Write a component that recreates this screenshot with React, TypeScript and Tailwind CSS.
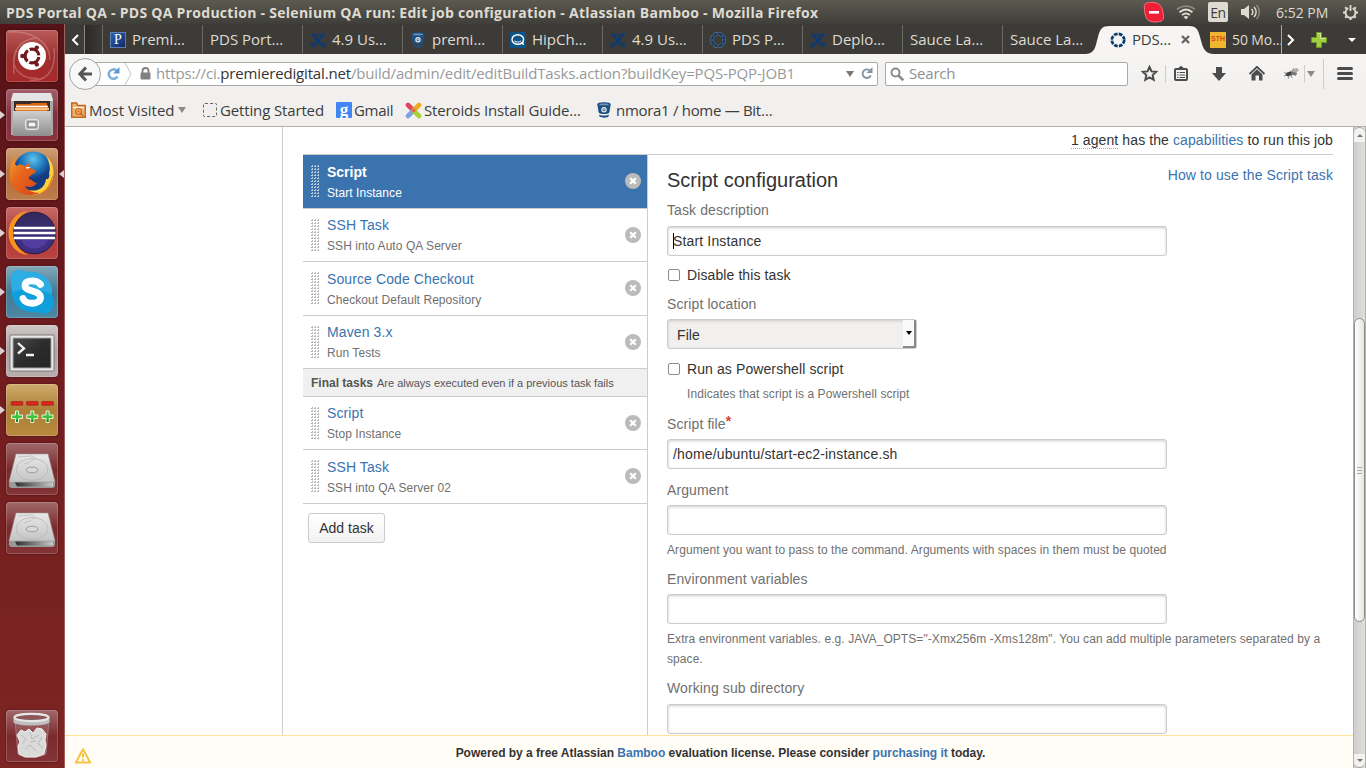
import type { ReactNode } from "react";

const ui = "font-['Open_Sans','Noto_Sans',sans-serif]";

/* ---------- favicons ---------- */

function JiraMark() {
  return (
    <svg width="16" height="16" viewBox="0 0 16 16" className="shrink-0" fill="none" stroke="#0b3a75">
      <path d="M1 2.200c2.500.3 3.500 1.300 5 3.500M15 2.200c-2.500.3-3.500 1.300-5 3.500" strokeWidth="2.200" />
      <path d="M5.500 5.500c1 2.500 3 4.500 5.500 6.500M10.500 5.500c-1 2.500-3 4.500-5.500 6.500" strokeWidth="2.400" />
      <path d="M5.500 1.200a2.600 2.600 0 0 0 5 0" strokeWidth="1.200" />
      <circle cx="2.800" cy="13" r="1.700" strokeWidth="1.400" />
      <circle cx="13.200" cy="13" r="1.700" strokeWidth="1.400" />
    </svg>
  );
}

function BitbucketMark() {
  return (
    <svg width="16" height="16" viewBox="0 0 16 16" className="shrink-0">
      <path d="M1.300 2.200C1.300 1 4 .2 8 .2s6.700.8 6.700 2l-1.300 8.300c-1 1-3 1.500-5.400 1.500s-4.400-.5-5.400-1.500z" fill="#205081" />
      <path d="M3 12.400c1.500.9 3 1.200 5 1.200s3.500-.3 5-1.200l-.5 2.200c-.8.8-2.500 1.200-4.500 1.200s-3.700-.4-4.500-1.200z" fill="#205081" />
      <ellipse cx="8" cy="2.400" rx="4.800" ry="0.900" fill="#6f93b8" />
      <circle cx="8" cy="7.800" r="2.100" fill="none" stroke="#e8eef5" strokeWidth="1.200" />
      <circle cx="8" cy="7.800" r="0.800" fill="#e8eef5" />
    </svg>
  );
}

function BambooRing({ light }: { light?: boolean }) {
  return (
    <svg width="16" height="16" viewBox="0 0 16 16" className="shrink-0">
      {light && <circle cx="8" cy="8" r="6.300" fill="none" stroke="#7890a8" strokeWidth="3.400" strokeDasharray="3.900 1.050" />}
      <circle cx="8" cy="8" r="6.200" fill="none" stroke="#0b3a6b" strokeWidth="2.700" strokeDasharray="3.700 1.170" />
    </svg>
  );
}

function PremiereMark() {
  return (
    <span className="flex h-4 w-4 shrink-0 items-center justify-center border border-[#5f7fb4] bg-linear-to-br from-[#2a62b8] to-[#102c66] font-['Liberation_Serif',serif] text-[14px] leading-none text-white">
      P
    </span>
  );
}

function HipChatMark() {
  return (
    <svg width="16" height="16" viewBox="0 0 16 16" className="shrink-0">
      <rect width="16" height="16" fill="#0d5484" />
      <ellipse cx="7.800" cy="7.500" rx="5.800" ry="4.800" fill="none" stroke="#fff" strokeWidth="1.400" />
      <path d="M4.500 8.800c1.500 1.700 5 1.700 6.500 0" fill="none" stroke="#fff" strokeWidth="1" />
      <path d="M10.500 11.500l3.500 1.800-.8-4z" fill="#fff" />
    </svg>
  );
}

/* ---------- launcher drawings ---------- */

const DashArt = () => (
  <svg viewBox="0 0 52 52" className="h-full w-full">
    <g fill="none" stroke="#e9b5b2" strokeOpacity=".35" strokeWidth="1.500">
      <path d="M2 2C22 0 44 10 44 30M8 44C6 22 12 10 30 8M24 50C44 52 50 36 48 18M10 20c-8 18 6 30 22 28" />
    </g>
    <circle cx="26" cy="26" r="14" fill="#fff" />
    <circle cx="26" cy="26" r="6.900" fill="none" stroke="#6e1a1e" strokeWidth="3.200" strokeDasharray="12.500 1.950" strokeDashoffset="-1" />
    <circle cx="16.400" cy="26" r="2.200" fill="#6e1a1e" />
    <circle cx="30.800" cy="17.600" r="2.200" fill="#6e1a1e" />
    <circle cx="30.800" cy="34.400" r="2.200" fill="#6e1a1e" />
  </svg>
);

const FilesArt = () => (
  <svg viewBox="0 0 52 52" className="h-full w-full">
    <defs>
      <linearGradient id="cab" x2="0" y2="1">
        <stop stopColor="#cfcfcf" />
        <stop offset="1" stopColor="#8e8e8e" />
      </linearGradient>
    </defs>
    <path d="M7 5h38l2 5v36H5V10z" fill="#a9a9a9" />
    <path d="M7 4h38l2 8H5z" fill="#e4e4e4" />
    <rect x="8" y="12" width="36" height="10" fill="#3a2b26" />
    <path d="M10 15l14 0 2-1h15v8H10z" fill="#d76a17" />
    <path d="M10 17.500h32" stroke="#fff" strokeWidth="1.500" />
    <path d="M9 20h34" stroke="#f7c27e" strokeWidth="2.500" />
    <path d="M7 22h38v25H7z" fill="url(#cab)" />
    <rect x="19.500" y="30.500" width="13" height="10" rx="2" fill="#b9b9b9" stroke="#e6e6e6" />
    <rect x="22" y="33" width="8" height="5" fill="#f5f5f5" stroke="#6b6b6b" />
  </svg>
);

const FirefoxArt = () => (
  <svg viewBox="0 0 52 52" className="h-full w-full">
    <defs>
      <radialGradient id="globe" cx=".5" cy=".2">
        <stop stopColor="#5ec3ee" />
        <stop offset=".6" stopColor="#1f74b8" />
        <stop offset="1" stopColor="#153a80" />
      </radialGradient>
      <linearGradient id="fox" x2="1" y2="1">
        <stop stopColor="#f5a12c" />
        <stop offset=".4" stopColor="#e8661b" />
        <stop offset="1" stopColor="#d4431a" />
      </linearGradient>
    </defs>
    <circle cx="27" cy="23" r="19.500" fill="url(#globe)" />
    <path d="M40 8c6 5 8 12 7.500 19C46 40 37 47 26 47l-5-5c10 3 18-2 19-11 3 1 4-3 3-6 2-5 0-12-3-17z" fill="#fbd13d" />
    <path d="M6 14c-4 11-3 19 1 25 6 8 18 10 27 6-8 0-13-3-15-7 5 2 9 1 12-3-3 0-4-3-8-4-1-3 3-4 7-7 0-2-4-4-8-4l3-6-6 4c-3-2-6-2-8 0-3-2-3-5-2-9-2 1-3 3-3 5z" fill="url(#fox)" />
    <path d="M33 46c10-2 14-11 14-20l-3 8c-2 6-6 9-11 12z" fill="#ee7f22" />
    <path d="M20 19l5 0-4 2z" fill="#fff" />
  </svg>
);

const EclipseArt = () => (
  <svg viewBox="0 0 52 52" className="h-full w-full">
    <defs>
      <linearGradient id="ecl" x2="0" y2="1">
        <stop stopColor="#322a5c" />
        <stop offset="1" stopColor="#43308a" />
      </linearGradient>
    </defs>
    <path d="M22 4C-4 6-4 46 22 48A24 24 0 0 1 22 4z" fill="#f7941e" />
    <circle cx="28.500" cy="26" r="20.800" fill="url(#ecl)" stroke="#211a42" strokeWidth="1" />
    <path d="M15 33h27a15 15 0 0 1-27 0z" fill="#533ca0" />
    <path d="M8 21h41M7.500 26h42M8 31h41" stroke="#fff" strokeWidth="2.300" />
  </svg>
);

const SkypeArt = () => (
  <svg viewBox="0 0 52 52" className="h-full w-full">
    <path d="M5 16C3 9 8 3 14 4c3 0 4 1 6 2 16-2 28 9 26 24 4 7 1 17-8 18-3 0-5-1-7-2C15 48 4 36 6 22c0-2-1-4-1-6z" fill="#109fdd" />
    <path d="M5 16C3 9 8 3 14 4c3 0 4 1 6 2 16-2 28 9 26 22-12-6-28-6-40-2z" fill="#49bbea" opacity=".5" />
    <path
      d="M34.500 18.500c-3-4.500-15.500-5.500-15.500 1 0 7 15.500 3.800 15.500 12 0 7.500-15 7.500-17.500 1"
      fill="none"
      stroke="#fff"
      strokeWidth="6.800"
      strokeLinecap="round"
    />
  </svg>
);

const TerminalArt = () => (
  <svg viewBox="0 0 52 52" className="h-full w-full">
    <defs>
      <linearGradient id="term" x2="1" y2="1">
        <stop stopColor="#4a4a4a" />
        <stop offset=".5" stopColor="#2c2c2c" />
        <stop offset="1" stopColor="#242424" />
      </linearGradient>
    </defs>
    <rect x="4" y="10" width="44" height="36" rx="1" fill="#e9e9e9" stroke="#7d7878" />
    <rect x="7" y="13" width="38" height="30" fill="url(#term)" stroke="#a5a5a5" />
    <path d="M12 18l6 5.500-6 5" fill="none" stroke="#f3f3f3" strokeWidth="2.300" />
    <path d="M20 30h8" stroke="#f3f3f3" strokeWidth="2.300" />
  </svg>
);

const MetersArt = () => (
  <svg viewBox="0 0 52 52" className="h-full w-full">
    {[11, 26.300, 41.600].map((x) => (
      <g key={x} transform={`translate(${x} 0)`}>
        <rect x="-5.800" y="17.600" width="11.600" height="3.600" rx=".5" fill="#e0231f" stroke="#9a2a1c" strokeWidth=".8" />
        <path d="M-5.500 31h4v-4h3v4h4v3.500h-4v4h-3v-4h-4z" fill="#3cc43c" stroke="#e8f3dc" strokeWidth="1" />
        <path d="M-1 35.500h2v2.500h-2z" fill="#168a22" />
      </g>
    ))}
  </svg>
);

const DriveArt = () => (
  <svg viewBox="0 0 52 52" className="h-full w-full">
    <defs>
      <linearGradient id="drv" x2="0" y2="1">
        <stop stopColor="#e8e8e8" />
        <stop offset="1" stopColor="#c4c4c4" />
      </linearGradient>
      <linearGradient id="drvf">
        <stop stopColor="#2d2d2d" />
        <stop offset=".6" stopColor="#8a8a8a" />
        <stop offset="1" stopColor="#c9c9c9" />
      </linearGradient>
    </defs>
    <path d="M10 11h32l7 28H3z" fill="url(#drv)" stroke="#9d9d9d" strokeWidth=".6" />
    <path d="M3 39h46v4.500l-2 1.500H5l-2-1.500z" fill="#9a9a9a" />
    <path d="M9 39.500h38v4H11z" fill="url(#drvf)" />
    <ellipse cx="26" cy="26.500" rx="16" ry="11" fill="none" stroke="#b5b5b5" strokeWidth=".8" />
    <path d="M12 14l12-1c10 0 2 6-6 8" fill="none" stroke="#b9b9b9" strokeWidth=".8" />
    <ellipse cx="26" cy="27" rx="5.800" ry="2.800" fill="#d9d9d9" stroke="#9c9c9c" strokeWidth="1" />
  </svg>
);

const TrashArt = () => (
  <svg viewBox="0 0 52 52" className="h-full w-full">
    <path d="M9 10l3 34c4 4 24 4 28 0l3-34z" fill="#b58a8d" fillOpacity=".3" stroke="#a98082" strokeWidth=".8" />
    <path
      d="M11 25l4-5 4 2 4-3 4 4 4-5 5 1 4 5-1 6 1 5-2 9-8 3H19l-6-3-1-8 2-4z"
      fill="#dadada"
      stroke="#f0f0f0"
      strokeWidth="1"
    />
    <path d="M15 25l5 4-4 5M24 22l2 7 7-4M19 39l5-4 6 6M36 27l-4 7 5 4M24 32l6-1" fill="none" stroke="#b9b9b9" strokeWidth="1" />
    <path d="M7.500 8v4c0 2 8 3.500 18 3.500S43.500 14 43.500 12V8z" fill="#bfbfbf" />
    <ellipse cx="25.500" cy="7.500" rx="17" ry="3.600" fill="#8c5558" stroke="#e6e6e6" strokeWidth="2.200" />
  </svg>
);

type Tile = { bg: string; art: () => ReactNode; running?: boolean; focused?: boolean };

const tiles: Tile[] = [
  { bg: "bg-linear-to-b from-[#b95a58] via-[#9c2f30] to-[#a8292b]", art: DashArt },
  { bg: "bg-linear-to-b from-[#a4606b] via-[#80303d] to-[#8b3442]", art: FilesArt, running: true },
  { bg: "bg-linear-to-b from-[#cf9f74] via-[#b1703f] to-[#bd7c48]", art: FirefoxArt, running: true, focused: true },
  { bg: "bg-linear-to-b from-[#c86a66] via-[#ab3c3a] to-[#b94340]", art: EclipseArt, running: true },
  { bg: "bg-linear-to-b from-[#84a9ba] via-[#447a94] to-[#4d88a4]", art: SkypeArt, running: true },
  { bg: "bg-linear-to-b from-[#cfc6c6] via-[#aca2a2] to-[#b7adad]", art: TerminalArt, running: true },
  { bg: "bg-linear-to-b from-[#cfab6c] via-[#ad8038] to-[#b88a3e]", art: MetersArt, running: true },
  { bg: "bg-linear-to-b from-[#a0696b] via-[#7a2a2d] to-[#843437]", art: DriveArt },
  { bg: "bg-linear-to-b from-[#a0696b] via-[#7a2a2d] to-[#843437]", art: DriveArt },
];

function LauncherTile({ tile }: { tile: Tile }) {
  const Art = tile.art;
  return (
    <div className="flex h-[52px] w-full shrink-0 items-center">
      <div className="w-1.5">
        {tile.running && <div className="h-0 w-0 border-y-4 border-l-[5px] border-y-transparent border-l-[#dcd0d0]" />}
      </div>
      <div className={`h-[52px] w-[52px] overflow-hidden rounded-[4px] shadow-[0_0_2px_rgba(0,0,0,.5),inset_0_0_0_1px_rgba(255,255,255,.18)] ${tile.bg}`}>
        <Art />
      </div>
      <div className="flex w-1.5 justify-end">
        {tile.focused && <div className="h-0 w-0 border-y-4 border-r-[5px] border-y-transparent border-r-[#dcd0d0]" />}
      </div>
    </div>
  );
}

function Launcher() {
  return (
    <aside className="flex w-[65px] shrink-0 flex-col justify-between border-r border-[#a5605e] bg-linear-to-b from-[#561216] via-[#731d20] to-[#7c2522] pt-1.5 pb-1.5">
      <div className="flex flex-col gap-[7px]">
        {tiles.map((t, i) => (
          <LauncherTile key={i} tile={t} />
        ))}
      </div>
      <LauncherTile tile={{ bg: "bg-linear-to-b from-[#a0696b] via-[#7a2a2d] to-[#843437]", art: TrashArt }} />
    </aside>
  );
}

/* ---------- top panel ---------- */

function TopPanel() {
  return (
    <header className={`flex h-6 shrink-0 items-center bg-linear-to-b from-[#5c5a50] to-[#3f3e3a] text-[#dfdbd2] ${ui}`}>
      <h1 className="ml-1.5 text-[14px] font-bold tracking-[0.275px] whitespace-nowrap">
        PDS Portal QA - PDS QA Production - Selenium QA run: Edit job configuration - Atlassian Bamboo - Mozilla Firefox
      </h1>
      <div className="ml-auto flex h-6 items-center">
        <svg width="22" height="22" viewBox="0 0 22 22" className="mr-[11px]">
          <path d="M1.500 7C.5 3.500 3 1 6.500 1.600c6-1 12.500 1.400 13 8.400 2 6 1.500 10-3 10.500C10 22 2.500 20.500 2.200 13 1 10.500 1.800 8.500 1.500 7z" fill="#ee1f36" stroke="#f7707e" strokeWidth="1" />
          <rect x="6" y="10" width="10" height="2.600" fill="#fff" />
        </svg>
        <svg width="20" height="16" viewBox="0 0 20 16" className="mr-3" fill="none">
          <path d="M1 5.500C6 1 14 1 19 5.500" stroke="#8a877e" strokeWidth="1.800" />
          <path d="M3.500 8.300c4-3.400 9-3.400 13 0M6 11.100c2.500-2 5.500-2 8 0" stroke="#dfdbd2" strokeWidth="1.800" />
          <path d="M7.500 12.800c1.500-1 3.500-1 5 0L10 15.500z" fill="#dfdbd2" />
        </svg>
        <span className="mr-[13px] flex h-5 w-5 items-center justify-center rounded-[2px] bg-[#dfdbd2] text-[14px] tracking-tight text-[#3c3b37]">En</span>
        <svg width="20" height="18" viewBox="0 0 20 18" className="mr-[15px]" fill="none">
          <path d="M0 6h3l5-4v14l-5-4H0z" fill="#dfdbd2" />
          <path d="M10.500 6a4 4 0 0 1 0 6M13 4a7 7 0 0 1 0 10" stroke="#dfdbd2" strokeWidth="1.500" />
          <path d="M15.500 2a10 10 0 0 1 0 14" stroke="#8a877e" strokeWidth="1.500" />
        </svg>
        <span className="mr-3 w-[54px] text-[14px] whitespace-nowrap">6:52 PM</span>
        <svg width="17" height="17" viewBox="0 0 17 17" className="mr-[7px]" fill="none" stroke="#dfdbd2">
          <path d="M6.300 4.200a5 5 0 1 0 4.400 0" strokeWidth="1.900" />
          <path d="M8.500 1v6" strokeWidth="1.800" />
          <path d="M1 8.500h2M14 8.500h2M8.500 14v2M3.200 3.200l1.400 1.400M13.800 3.200l-1.400 1.400M3.200 13.800l1.400-1.400M13.800 13.800l-1.400-1.400" strokeWidth="2" />
        </svg>
      </div>
    </header>
  );
}

/* ---------- browser tabs ---------- */

const tabs: { label: string; icon?: ReactNode }[] = [
  { label: "Premi…", icon: <PremiereMark /> },
  { label: "PDS Port…" },
  { label: "4.9 Us…", icon: <JiraMark /> },
  { label: "premi…", icon: <BitbucketMark /> },
  { label: "HipCh…", icon: <HipChatMark /> },
  { label: "4.9 Us…", icon: <JiraMark /> },
  { label: "PDS P…", icon: <BambooRing light /> },
  { label: "Deplo…", icon: <JiraMark /> },
  { label: "Sauce La…" },
];

function TabStrip() {
  return (
    <nav className={`flex h-[30px] shrink-0 items-center bg-[#3c3b37] pt-px text-[15px] text-[#dfdbd2] ${ui}`}>
      <div className="flex h-full w-[19px] items-center justify-end pr-[5px]">
        <svg width="8" height="12" viewBox="0 0 8 12" fill="none" stroke="#fff" strokeWidth="2">
          <path d="M7 1L2 6l5 5" />
        </svg>
      </div>
      <div className="h-full w-px bg-[#8b8a85]" />
      <div className="h-full w-[17px] bg-linear-to-r from-[#2b2a27] to-[#3c3b37]" />
      {tabs.map((t, i) => (
        <div key={i} className="flex h-full w-[100px] shrink-0 items-center gap-1.5 border-l border-[#6b6a64] pl-[7px] whitespace-nowrap">
          {t.icon}
          <span>{t.label}</span>
        </div>
      ))}
      <div className="flex h-full w-[88px] shrink-0 items-center border-l border-[#6b6a64] pl-[7px] whitespace-nowrap">Sauce La…</div>
      <div className="relative h-full w-[120px] shrink-0 text-[#3c3c3c]">
        <svg width="128" height="30" viewBox="0 0 128 30" className="absolute -top-px -left-1">
          <path d="M0 30C9 29 9 24 12 13 14 5 16 2 24 2h79c8 0 9 4 11 11 3 11 4 16 13 17z" fill="#f6f5f4" />
        </svg>
        <div className="relative flex h-full items-center pl-5">
          <BambooRing />
          <span className="ml-1.5 w-[49px] tracking-[-0.2px]">PDS…</span>
          <svg width="9" height="9" viewBox="0 0 9 9" stroke="#666" strokeWidth="2.400">
            <path d="M1 1l7 7M8 1L1 8" />
          </svg>
        </div>
      </div>
      <div className="flex h-full w-[71px] shrink-0 items-center gap-1.5 overflow-hidden whitespace-nowrap">
        <span className="flex h-4 w-4 shrink-0 items-center justify-center bg-[#edb62e] font-['Liberation_Sans',sans-serif] text-[7px] font-bold text-[#d6471e]">STH</span>
        <span className="text-[14px] tracking-[-0.1px]">50 Mo…</span>
      </div>
      <div className="h-full w-px bg-[#aaa9a5]" />
      <svg width="8" height="12" viewBox="0 0 8 12" fill="none" stroke="#fff" strokeWidth="2" className="ml-[5px]">
        <path d="M1 1l5 5-5 5" />
      </svg>
      <svg width="16" height="16" viewBox="0 0 16 16" className="ml-4">
        <path d="M5.500.5h5v5h5v5h-5v5h-5v-5h-5v-5h5z" fill="#a3cc45" stroke="#6c9a1f" />
        <path d="M6.500 1.500h3v5h5" fill="none" stroke="#d3e99b" />
      </svg>
      <div className="ml-[21px] h-0 w-0 border-x-4 border-t-4 border-x-transparent border-t-white" />
    </nav>
  );
}

/* ---------- navigation toolbar ---------- */

function NavBar() {
  return (
    <div className={`flex h-[38px] shrink-0 items-center bg-linear-to-b from-[#f6f5f4] to-[#f1f0ee] pt-px text-[15px] ${ui}`}>
      <div className="z-10 ml-1 flex h-8 w-8 shrink-0 items-center justify-center rounded-full border border-[#a3a3a0] bg-[#f8f8f8]">
        <svg width="14" height="16" viewBox="0 0 14 16" fill="none" stroke="#555" strokeWidth="3">
          <path d="M8 1.500L1.800 8 8 14.500M2 8h12" />
        </svg>
      </div>
      <div className="-ml-2 flex h-6 w-[785px] shrink-0 items-center rounded-r-[2px] border border-[#a9a9a5] bg-white">
        <svg width="13" height="14" viewBox="0 0 13 14" className="ml-[13px] shrink-0" fill="none">
          <path d="M10.500 9.500A4.700 4.700 0 1 1 9.500 3.500" stroke="#7fb0dc" strokeWidth="2.600" />
          <path d="M12.500 0v6.500H6z" fill="#5f96cc" />
        </svg>
        <svg width="9" height="22" viewBox="0 0 9 22" className="ml-1 shrink-0" fill="none" stroke="#c4c4c4">
          <path d="M1 0l6 11-6 11" />
        </svg>
        <svg width="11" height="13" viewBox="0 0 11 13" className="ml-[7px] shrink-0">
          <path d="M2.500 6V4a3 3 0 0 1 6 0v2" fill="none" stroke="#808080" strokeWidth="1.800" />
          <rect x=".5" y="5.500" width="10" height="7" rx="1" fill="#808080" />
        </svg>
        <span className="ml-[5px] w-[690px] shrink-0 tracking-[-0.16px] whitespace-nowrap text-[#999]">
          https://ci.<span className="text-[#333]">premieredigital.net</span>/build/admin/edit/editBuildTasks.action?buildKey=PQS-PQP-JOB1
        </span>
        <div className="h-0 w-0 border-x-4 border-t-[6px] border-x-transparent border-t-[#777]" />
        <svg width="12" height="13" viewBox="0 0 12 13" className="ml-[7px]" fill="none">
          <path d="M9.800 8.500A4.300 4.300 0 1 1 8.500 3.200" stroke="#8495a5" strokeWidth="1.900" />
          <path d="M11.500 0v6H5.500z" fill="#8495a5" />
        </svg>
      </div>
      <div className="ml-[7px] flex h-6 w-[243px] shrink-0 items-center rounded-[2px] border border-[#a9a9a5] bg-white">
        <svg width="14" height="14" viewBox="0 0 14 14" className="ml-1" fill="none" stroke="#8a8a8a">
          <circle cx="5.500" cy="5.500" r="4" strokeWidth="2" />
          <path d="M8.500 8.500l4.800 4.800" strokeWidth="2.500" />
        </svg>
        <span className="ml-[5px] tracking-[-0.2px] text-[#8f8f8f]">Search</span>
      </div>
      <svg width="17" height="17" viewBox="0 0 17 17" className="ml-[13px]" fill="none" stroke="#4c4c4c" strokeWidth="2">
        <path d="M8.500 2l2 4.400 4.700.5-3.500 3.200 1 4.700-4.200-2.400-4.200 2.400 1-4.700L1.800 6.900l4.700-.5z" />
      </svg>
      <div className="ml-[7px] h-[18px] w-px bg-[#cdccca]" />
      <svg width="14" height="15" viewBox="0 0 14 15" className="ml-2" fill="none" stroke="#4c4c4c">
        <rect x="1" y="3" width="12" height="11" rx="1" strokeWidth="2" />
        <path d="M4.500 2.500L6 .8h2l1.500 1.700z" fill="#4c4c4c" />
        <path d="M3 6.500h1.500M3 9h1.500M3 11.500h1.500M5.500 6.500H11M5.500 9H11M5.500 11.500H11" strokeWidth="1.200" />
      </svg>
      <svg width="14" height="14" viewBox="0 0 14 14" className="ml-6">
        <path d="M4 0h6v6h4l-7 8-7-8h4z" fill="#4c4c4c" />
      </svg>
      <svg width="16" height="15" viewBox="0 0 16 15" className="ml-[23px]">
        <path d="M.5 8L8 .8 15.500 8" fill="none" stroke="#4c4c4c" strokeWidth="1.800" />
        <path d="M2.500 8.500L8 3.200l5.500 5.300V14.500H10V9.500H6.500v5h-4z" fill="#4c4c4c" />
      </svg>
      <svg width="17" height="14" viewBox="0 0 17 14" className="ml-[18px]">
        <path d="M6 5l8-3.500 1.500 2L8 7z" fill="#b5b5b5" stroke="#888" strokeWidth=".6" />
        <ellipse cx="6" cy="7" rx="3.600" ry="2.100" fill="#444" transform="rotate(-15 6 7)" />
        <path d="M1 5l3 2M1 9l3-1M5 12l1.500-4M9 11l-1-4M13 8.500L9 7M11 1L9 5" stroke="#777" strokeWidth=".8" />
        <ellipse cx="11" cy="6.500" rx="3" ry="1.500" fill="#777" />
      </svg>
      <div className="ml-1 h-[18px] w-px bg-[#cdccca]" />
      <div className="ml-[2px] h-0 w-0 border-x-4 border-t-[6px] border-x-transparent border-t-[#8a8a8a]" />
      <div className="ml-2 h-[30px] w-px bg-[#cdccca]" />
      <div className="ml-[13px] flex flex-col gap-[2px]">
        <div className="h-[3px] w-4 rounded-full bg-[#4c4c4c]" />
        <div className="h-[3px] w-4 rounded-full bg-[#4c4c4c]" />
        <div className="h-[3px] w-4 rounded-full bg-[#4c4c4c]" />
      </div>
    </div>
  );
}

function Bookmarks() {
  return (
    <div className={`flex h-[35px] shrink-0 items-center border-b border-[#b1b1a9] bg-[#f1f0ee] pt-[2px] text-[15px] whitespace-nowrap text-[#3c3c3c] ${ui}`}>
      <div className="flex w-[138px] items-center pl-1.5">
        <svg width="15" height="16" viewBox="0 0 15 16" className="shrink-0">
          <path d="M.7 15.300V1h5l1 2.500h7.600v11.800z" fill="#f0b070" stroke="#c4661c" strokeWidth="1.400" />
          <path d="M2 5.500h11" stroke="#fff" strokeWidth="1.200" />
          <circle cx="7.500" cy="9.500" r="3" fill="none" stroke="#c4661c" strokeWidth="1.200" />
          <circle cx="7.500" cy="9.500" r="1" fill="#c4661c" />
          <path d="M9.500 11.500l3 2.500" stroke="#c4661c" strokeWidth="1.400" />
        </svg>
        <span className="ml-[3px] w-[89px]">Most Visited</span>
        <div className="h-0 w-0 border-x-4 border-t-[6px] border-x-transparent border-t-[#8a8a8a]" />
      </div>
      <div className="flex w-[133px] items-center">
        <div className="h-[14px] w-[14px] rounded-[2px] border border-dashed border-[#666]" />
        <span className="ml-[3px] tracking-[-0.14px]">Getting Started</span>
      </div>
      <div className="flex w-[69px] items-center">
        <span className="flex h-4 w-4 items-center justify-center rounded-[1px] bg-[#4285f4] pb-[2px] font-['Liberation_Serif',serif] text-[17px] leading-none font-bold text-white">g</span>
        <span className="ml-[2px] tracking-[-0.3px]">Gmail</span>
      </div>
      <div className="flex w-[191px] items-center">
        <svg width="17" height="17" viewBox="0 0 17 17" strokeWidth="4.600" strokeLinecap="round" className="shrink-0">
          <path d="M8.500 8.500L3 3" stroke="#e0455a" />
          <path d="M8.500 8.500L14 3" stroke="#f2a81d" />
          <path d="M8.500 8.500L3 14" stroke="#7fa3dc" />
          <path d="M8.500 8.500L14 14" stroke="#a8cf38" />
          <circle cx="8.500" cy="8.500" r="2" fill="#e2683e" />
        </svg>
        <span className="ml-[2px] tracking-[-0.14px]">Steroids Install Guide…</span>
      </div>
      <div className="flex items-center">
        <BitbucketMark />
        <span className="ml-1 tracking-[-0.3px]">nmora1 / home — Bit…</span>
      </div>
    </div>
  );
}

/* ---------- Bamboo page ---------- */

type Task = { name: string; note: string; tall?: boolean; selected?: boolean };

const mainTasks: Task[] = [
  { name: "Script", note: "Start Instance", tall: true, selected: true },
  { name: "SSH Task", note: "SSH into Auto QA Server" },
  { name: "Source Code Checkout", note: "Checkout Default Repository", tall: true },
  { name: "Maven 3.x", note: "Run Tests" },
];
const finalTasks: Task[] = [
  { name: "Script", note: "Stop Instance" },
  { name: "SSH Task", note: "SSH into QA Server 02", tall: true },
];

function Grip({ selected }: { selected?: boolean }) {
  return (
    <svg width="8" height="34" className="mt-[10px] shrink-0 self-start" shapeRendering="crispEdges">
      {Array.from({ length: 11 }, (_, r) =>
        [0, 3, 6].map((x) => (
          <g key={`${r}-${x}`}>
            <rect x={x} y={r * 3 + 1} width="1" height="1" fill={selected ? "#c9cdd0" : "#b5b5b5"} />
            <rect x={x + 1} y={r * 3} width="1" height="2" fill={selected ? "#b9c6d3" : "#b9b9b9"} />
          </g>
        )),
      )}
    </svg>
  );
}

function TaskRow({ task }: { task: Task }) {
  return (
    <li
      className={`flex items-start border-b border-[#ccc] pl-2 ${task.tall ? "h-[54px]" : "h-[53px]"} ${
        task.selected ? "bg-[#3b73af] text-white" : "bg-white text-[#707070]"
      }`}
    >
      <Grip selected={task.selected} />
      <div className={`ml-2 flex-1 ${task.tall ? "pt-[7px]" : "pt-1.5"}`}>
        <div className={`text-[14px] leading-5 ${task.selected ? "font-bold tracking-normal" : "text-[#3b73af]"}`}>{task.name}</div>
        <div className="mt-px text-[12px] leading-5 tracking-[0.06px]">{task.note}</div>
      </div>
      <svg width="16" height="16" viewBox="0 0 16 16" className="mt-[18px] mr-1.5">
        <circle cx="8" cy="8" r="8" fill="#bbb" />
        <path d="M5.200 5.200l5.600 5.600M10.800 5.200l-5.600 5.600" stroke="#fff" strokeWidth="2.200" />
      </svg>
    </li>
  );
}

function TextInput({ value, caret, gap = "mt-[5px]" }: { value?: string; caret?: boolean; gap?: string }) {
  return (
    <div
      className={`flex h-[30px] w-[500px] shrink-0 items-center rounded-[3px] border border-[#ccc] bg-white pl-[5px] tracking-[0.15px] shadow-[inset_0_1px_3px_#ccc] ${gap}`}
    >
      {caret && <span className="-mr-px h-4 w-px bg-black" />}
      {value}
    </div>
  );
}

function Label({ children, gap }: { children: ReactNode; gap: string }) {
  return <div className={`h-5 shrink-0 leading-5 text-[#707070] ${gap}`}>{children}</div>;
}

function Hint({ children, extra = "" }: { children: ReactNode; extra?: string }) {
  return <p className={`mt-[5px] shrink-0 text-[12px] leading-5 tracking-[0.07px] text-[#707070] ${extra}`}>{children}</p>;
}

function CheckRow({ children, gap }: { children: ReactNode; gap: string }) {
  return (
    <div className={`flex h-5 shrink-0 items-center leading-5 ${gap}`}>
      <span className="mr-[7px] ml-px h-3 w-3 rounded-[2px] border border-[#8f8d89] bg-white" />
      {children}
    </div>
  );
}

function TaskForm() {
  return (
    <section className="flex flex-1 flex-col overflow-hidden border-l border-[#ccc] pt-[15px] pl-[19px]">
      <div className="flex h-5 shrink-0 items-center justify-between">
        <h2 className="text-[20px] leading-5 tracking-normal">Script configuration</h2>
        <a className="-mt-2.5 text-[#3b73af]">How to use the Script task</a>
      </div>
      <Label gap="mt-[10px]">Task description</Label>
      <TextInput value="Start Instance" caret gap="mt-1.5" />
      <CheckRow gap="mt-[9px]">Disable this task</CheckRow>
      <Label gap="mt-[9px]">Script location</Label>
      <div className="mt-[5px] flex h-[30px] w-[250px] shrink-0 items-center justify-between rounded-[3px] border border-[#ccc] bg-[#f1f0ee] pl-[9px] shadow-[inset_0_1px_3px_#ccc]">
        <span className="pt-[2px]">File</span>
        <span className="flex h-7 w-[13px] items-center justify-center border-r-2 border-b-2 border-[#888] bg-[#fafafa]">
          <span className="h-0 w-0 border-x-[3.500px] border-t-4 border-x-transparent border-t-black" />
        </span>
      </div>
      <CheckRow gap="mt-[10px]">Run as Powershell script</CheckRow>
      <Hint extra="pl-5">Indicates that script is a Powershell script</Hint>
      <Label gap="mt-[10px]">
        Script file<span className="align-[3px] text-[14px] leading-none font-bold text-[#d04437]">*</span>
      </Label>
      <TextInput value="/home/ubuntu/start-ec2-instance.sh" />
      <Label gap="mt-[11px]">Argument</Label>
      <TextInput />
      <Hint>Argument you want to pass to the command. Arguments with spaces in them must be quoted</Hint>
      <Label gap="mt-[9px]">Environment variables</Label>
      <TextInput />
      <Hint>
        Extra environment variables. e.g. JAVA_OPTS="-Xmx256m -Xms128m". You can add multiple parameters separated by a space.
      </Hint>
      <Label gap="mt-[9px]">Working sub directory</Label>
      <TextInput gap="mt-1.5" />
    </section>
  );
}

function Page() {
  return (
    <main className="flex min-w-0 flex-1 flex-col bg-white">
      <div className="flex min-h-0 flex-1 overflow-hidden">
        <div className="w-[217px] shrink-0" />
        <div className="flex flex-1 flex-col border-l border-[#ccc] pr-5 pl-5">
          <div className="h-7 shrink-0 border-b border-[#ccc] pt-[3px] text-right leading-5">
            <span className="inline-block h-[19px] border-b border-dotted border-[#aaa]">1 agent</span> has the <a className="text-[#3b73af]">capabilities</a> to run this job
          </div>
          <div className="flex min-h-0 flex-1">
            <section className="w-[344px] shrink-0">
              <ul>
                {mainTasks.map((t, i) => (
                  <TaskRow key={i} task={t} />
                ))}
              </ul>
              <div className="flex h-7 items-center border-b border-[#ccc] bg-[#f0f0f0] pl-2 text-[12px] tracking-normal text-[#555]">
                <b className="mr-1">Final tasks</b>
                <span className="pt-px text-[11px]">Are always executed even if a previous task fails</span>
              </div>
              <ul>
                {finalTasks.map((t, i) => (
                  <TaskRow key={i} task={t} />
                ))}
              </ul>
              <button className="mt-[9px] ml-[5px] h-[30px] w-[77px] rounded-[3px] border border-[#ccc] bg-linear-to-b from-white to-[#f2f2f2] tracking-normal">Add task</button>
            </section>
            <TaskForm />
          </div>
        </div>
      </div>
      <footer className="flex h-[33px] shrink-0 items-center border-t border-[#ffe495] bg-[#fffdf6] text-[12px] font-bold tracking-[-0.02px]">
        <svg width="18" height="18" viewBox="0 0 18 18" className="mt-2 ml-[9px]">
          <path d="M9 2.200L16.200 15.500H1.800z" fill="none" stroke="#f6c342" strokeWidth="2" strokeLinejoin="round" />
          <path d="M9 6.500v4.300M9 12v2" stroke="#f6c342" strokeWidth="2" />
        </svg>
        <p className="flex-1 pt-[2px] pr-1 text-center">
          Powered by a free Atlassian <a className="text-[#3b73af]">Bamboo</a> evaluation license. Please consider <a className="text-[#3b73af]">purchasing it</a> today.
        </p>
      </footer>
    </main>
  );
}

function Scrollbar() {
  return (
    <div className="flex w-[13px] shrink-0 flex-col items-center border-x border-[#b3b3ad] bg-linear-to-r from-[#cfcecc] to-[#e0dfdd]">
      <div className="flex h-[15px] w-full items-center justify-center rounded-t-full border-t border-[#a5a5a0] bg-[#f3f2f1]">
        <span className="h-0 w-0 border-x-[3px] border-b-[3px] border-x-transparent border-b-[#777]" />
      </div>
      <div className="h-[176px]" />
      <div className="flex h-[304px] w-full flex-col items-center justify-center gap-[2px] rounded-full border border-[#8e8e89] bg-linear-to-r from-white to-[#e6e5e3]">
        <div className="h-px w-[5px] bg-[#aaa]" />
        <div className="h-px w-[5px] bg-[#aaa]" />
        <div className="h-px w-[5px] bg-[#aaa]" />
      </div>
      <div className="flex-1" />
      <div className="flex h-[14px] w-full items-center justify-center rounded-b-full border-b border-[#a5a5a0] bg-[#f3f2f1]">
        <span className="h-0 w-0 border-x-[3px] border-t-[3px] border-x-transparent border-t-[#777]" />
      </div>
    </div>
  );
}

export default function App() {
  return (
    <div className="flex h-[768px] w-[1366px] flex-col overflow-hidden font-['Liberation_Sans',Arial,sans-serif] text-[14px] text-[#333]">
      <TopPanel />
      <div className="flex min-h-0 flex-1">
        <Launcher />
        <div className="flex min-w-0 flex-1 flex-col">
          <TabStrip />
          <NavBar />
          <Bookmarks />
          <div className="flex min-h-0 flex-1 tracking-[0.1px]">
            <Page />
            <Scrollbar />
          </div>
        </div>
      </div>
    </div>
  );
}
